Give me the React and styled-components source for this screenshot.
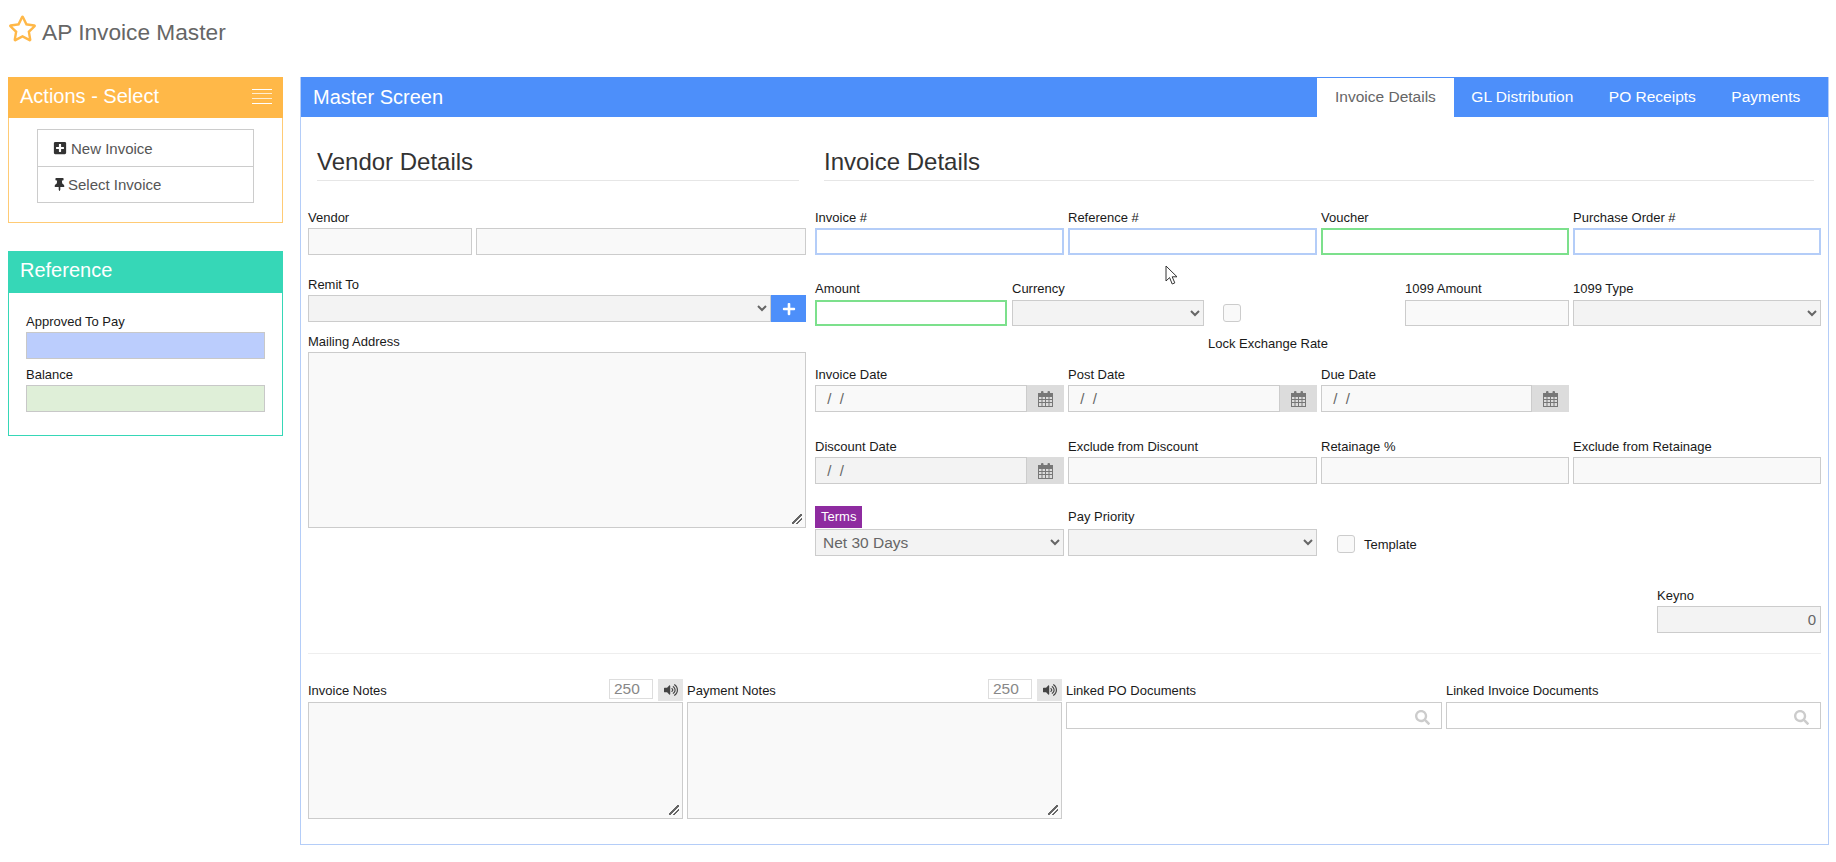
import React from 'react'
import styled, { createGlobalStyle } from 'styled-components'
import { FaRegStar, FaPlusSquare, FaThumbtack, FaPlus, FaVolumeUp, FaSearch } from 'react-icons/fa'

const GlobalStyle = createGlobalStyle`
    html, body {
        margin: 0;
        padding: 0;
        background: #fff;
        font-family: "Liberation Sans", Arial, sans-serif;
    }
    * {
        box-sizing: border-box;
    }
`

const controlColors = {
    blue: { border: '2px solid #b4cdf8', bg: '#fff' },
    green: { border: '2px solid #7ce08c', bg: '#fff' },
    plain: { border: '1px solid #ccc', bg: '#f9f9f9' },
    gray: { border: '1px solid #ccc', bg: '#f3f3f3' },
    white: { border: '1px solid #ccc', bg: '#fff' },
    approved: { border: '1px solid #c8c8c8', bg: '#bbcdfd' },
    balance: { border: '1px solid #c8c8c8', bg: '#dfefd8' },
}

const Page = styled.div`
    position: relative;
    width: 1836px;
    padding: 0 7px 0 8px;
`

const TitleBar = styled.div`
    display: flex;
    align-items: flex-start;
    gap: 5px;
    height: 77px;
    padding-top: 14px;
    color: #ffb848;
`

const TitleText = styled.h1`
    margin: 1px 0 0;
    font-size: 22.7px;
    line-height: 34px;
    font-weight: 400;
    color: #666;
`

const Columns = styled.div`
    display: flex;
    align-items: flex-start;
    gap: 17px;
`

const Sidebar = styled.aside`
    display: flex;
    flex-direction: column;
    gap: 28px;
    width: 275px;
    flex: none;
`

const Portlet = styled.section`
    border: 1px solid ${p => p.$border};
`

const PortletHead = styled.div`
    display: flex;
    align-items: center;
    justify-content: space-between;
    height: ${p => p.$h}px;
    margin: -1px -1px 0;
    padding: 0 11px 3px 12px;
    background: ${p => p.$bg};
    color: #fff;
    font-size: 20px;
`

const ActionGroup = styled.div`
    margin: 11px 28px 19px;
    border: 1px solid #ccc;
`

const ActionItem = styled.a`
    display: flex;
    align-items: center;
    gap: ${p => p.$gap}px;
    height: 36px;
    padding-left: 15px;
    color: #555;
    font-size: 15px;
    cursor: pointer;

    & + & {
        border-top: 1px solid #ccc;
    }

    svg {
        color: #333;
    }
`

const ReferenceBody = styled.div`
    display: flex;
    flex-direction: column;
    gap: 7px;
    padding: 20px 17px 23px;
`

const Panel = styled.main`
    width: 1529px;
    border: 1px solid #b4cdf8;
    padding: 0 7px 25px;
`

const PanelHead = styled.div`
    display: flex;
    align-items: flex-end;
    justify-content: space-between;
    height: 40px;
    margin: -1px -7px 0;
    padding-right: 10px;
    background: #4d8ffa;
`

const PanelTitle = styled.div`
    padding: 0 0 8px 12px;
    color: #fff;
    font-size: 20px;
    line-height: 24px;
`

const Tabs = styled.nav`
    display: flex;
`

const Tab = styled.a`
    height: 39px;
    padding: 0 17.75px;
    line-height: 37px;
    font-size: 15.5px;
    cursor: pointer;
    color: ${p => (p.$active ? '#666' : '#fff')};
    background: ${p => (p.$active ? '#fff' : 'transparent')};
`

const TopSection = styled.div`
    display: flex;
    gap: 9px;
`

const VendorColumn = styled.div`
    width: 498px;
    flex: none;
`

const InvoiceColumn = styled.div`
    width: 1006px;
    flex: none;
`

const SectionHeading = styled.h3`
    margin: 30px 7px 0 9px;
    padding-bottom: 3px;
    border-bottom: 1px solid #e6e6e6;
    font-size: 24px;
    line-height: 30px;
    font-weight: 400;
    color: #333;
`

const Row = styled.div`
    display: flex;
    margin-top: ${p => p.$mt || 0}px;
    gap: ${p => p.$gap || 0}px;
`

const Grid4 = styled.div`
    display: grid;
    grid-template-columns: 249px 249px 248px 248px;
    gap: 4px;
    align-items: end;
    margin-top: ${p => p.$mt || 0}px;
`

const Field = styled.div`
    min-width: 0;
    margin-top: ${p => p.$mt || 0}px;
    margin-left: ${p => p.$ml || 0}px;
    ${p => p.$w && `width: ${p.$w}px; flex: none;`}
`

const Label = styled.label`
    display: block;
    height: 16px;
    margin-bottom: 3px;
    font-size: 13px;
    line-height: ${p => p.$lh || 18}px;
    color: #1a1a1a;
    white-space: nowrap;
`

const TermsBadge = styled.span`
    display: block;
    width: 47px;
    height: 22px;
    margin-bottom: 1px;
    padding-left: 6px;
    background: #8e2ba0;
    color: #fff;
    font-size: 13px;
    line-height: 22px;
`

const Input = styled.input`
    display: block;
    width: 100%;
    height: ${p => p.$h || 27}px;
    min-width: 0;
    padding: 0 ${p => (p.$align === 'right' ? 4 : 7)}px;
    outline: none;
    border-radius: 0;
    font-family: inherit;
    font-size: 15px;
    color: #666;
    text-align: ${p => p.$align || 'left'};
    border: ${p => controlColors[p.$kind || 'plain'].border};
    background: ${p => controlColors[p.$kind || 'plain'].bg};
`

const VendorCode = styled(Input)`
    width: 164px;
    flex: none;
`

const Select = styled.select`
    display: block;
    width: 100%;
    height: ${p => p.$h || 27}px;
    padding: 0 3px;
    outline: none;
    border: 1px solid #ccc;
    border-radius: 0;
    background-color: #f3f3f3;
    font-family: inherit;
    font-size: 15.5px;
    color: #666;
`

const TextArea = styled.textarea`
    display: block;
    width: 100%;
    height: ${p => p.$h}px;
    padding: 6px 8px;
    outline: none;
    border: 1px solid #ccc;
    border-radius: 0;
    background: #f9f9f9;
    font-family: inherit;
    font-size: 14px;

    &::-webkit-resizer {
        background-image:
            linear-gradient(135deg, transparent 44%, #666 44%, #666 56%, transparent 56%),
            linear-gradient(135deg, transparent 68%, #666 68%, #666 80%, transparent 80%);
        background-size: 10px 10px;
        background-position: 2px 2px;
        background-repeat: no-repeat;
    }
`

const InputGroup = styled.div`
    display: flex;
`

const AddonButton = styled.button`
    display: flex;
    align-items: center;
    justify-content: center;
    flex: none;
    width: ${p => p.$w}px;
    height: 27px;
    padding: 0;
    border: 0;
    background: ${p => p.$bg};
    color: ${p => p.$color};
`

const Checkbox = styled.input.attrs({ type: 'checkbox' })`
    appearance: none;
    display: block;
    flex: none;
    width: 18px;
    height: 18px;
    margin: 0;
    border: 1px solid #ccc;
    border-radius: 3px;
    background: #f9f9f9;
`

const LockCell = styled.div`
    flex: 1;
    padding: 23px 0 0 19px;
`

const LockLabel = styled.div`
    margin: 14px 0 0 -15px;
    font-size: 13px;
    line-height: 16px;
    color: #1a1a1a;
    white-space: nowrap;
`

const TemplateCell = styled.div`
    display: flex;
    align-items: center;
    gap: 9px;
    margin-bottom: 3px;
    padding-left: 16px;
    font-size: 13px;
    color: #1a1a1a;
`

const KeynoRow = styled.div`
    display: flex;
    justify-content: flex-end;
    margin-top: 31px;
`

const Divider = styled.hr`
    height: 1px;
    margin: 20px 0 0;
    border: 0;
    background: #eee;
`

const NotesGrid = styled.div`
    display: grid;
    grid-template-columns: 375px 375px 376px 375px;
    gap: 4px;
    margin-top: 25px;
`

const NotesHead = styled.div`
    display: flex;
    align-items: flex-start;
    height: 23px;

    ${Label} {
        flex: 1;
        margin: 3px 0 0;
    }
`

const Counter = styled.input`
    width: 44px;
    height: 20px;
    margin-right: 5px;
    padding: 0 4px;
    outline: none;
    border: 1px solid #ddd;
    background: #fff;
    font-family: inherit;
    font-size: 15.5px;
    color: #888;
`

const SoundButton = styled.button`
    display: flex;
    align-items: center;
    justify-content: center;
    width: 25px;
    height: 22px;
    padding: 0;
    border: 0;
    background: #e5e5e5;
    color: #444;
`

const SearchBox = styled.div`
    position: relative;

    svg {
        position: absolute;
        top: 8px;
        right: 12px;
        color: #ccc;
    }
`

const Cursor = styled.svg`
    position: absolute;
    left: 1165px;
    top: 265px;
    pointer-events: none;
`

function CalendarIcon() {
    return (
        <svg width="15" height="16" viewBox="0 0 15 16" fill="#777">
            <rect x="3" y="0" width="2.5" height="4" rx="1" />
            <rect x="9.5" y="0" width="2.5" height="4" rx="1" />
            <path fillRule="evenodd" d="M0 2h15v14H0zM1 6v2h2.5V6zM4.5 6v2H7V6zM8 6v2h2.5V6zM11.5 6v2H14V6zM1 9v2h2.5V9zM4.5 9v2H7V9zM8 9v2h2.5V9zM11.5 9v2H14V9zM1 12v3h2.5v-3zM4.5 12v3H7v-3zM8 12v3h2.5v-3zM11.5 12v3H14v-3z" />
        </svg>
    )
}

function MenuLines() {
    return (
        <svg width="20" height="15" viewBox="0 0 20 15" fill="#fff">
            <rect y="0" width="20" height="1" />
            <rect y="4" width="20" height="1" opacity="0.75" />
            <rect y="9" width="20" height="1" opacity="0.75" />
            <rect y="14" width="20" height="1" />
        </svg>
    )
}

function TextField({ label, kind }) {
    return (
        <Field>
            <Label>{label}</Label>
            <Input $kind={kind} readOnly />
        </Field>
    )
}

function DateField({ label, kind }) {
    return (
        <Field>
            <Label>{label}</Label>
            <InputGroup>
                <Input $kind={kind} readOnly value=" /  /" />
                <AddonButton $w={37} $bg="#dcdcdc" $color="#777"><CalendarIcon /></AddonButton>
            </InputGroup>
        </Field>
    )
}

function NotesField({ label }) {
    return (
        <div>
            <NotesHead>
                <Label>{label}</Label>
                <Counter readOnly value="250" />
                <SoundButton><FaVolumeUp size={14} /></SoundButton>
            </NotesHead>
            <TextArea $h={117} />
        </div>
    )
}

function LinkedField({ label }) {
    return (
        <div>
            <NotesHead>
                <Label>{label}</Label>
            </NotesHead>
            <SearchBox>
                <Input $kind="white" readOnly />
                <FaSearch size={15} />
            </SearchBox>
        </div>
    )
}

export default function App() {
    return (
        <Page>
            <GlobalStyle />
            <TitleBar>
                <FaRegStar size={29} />
                <TitleText>AP Invoice Master</TitleText>
            </TitleBar>

            <Columns>
                <Sidebar>
                    <Portlet $border="#ffcb75">
                        <PortletHead $bg="#ffb848" $h={41}>
                            <span>Actions - Select</span>
                            <MenuLines />
                        </PortletHead>
                        <ActionGroup>
                            <ActionItem $gap={4}><FaPlusSquare size={14} />New Invoice</ActionItem>
                            <ActionItem $gap={2}><FaThumbtack size={13} />Select Invoice</ActionItem>
                        </ActionGroup>
                    </Portlet>

                    <Portlet $border="#36d7b7">
                        <PortletHead $bg="#36d7b7" $h={42}>Reference</PortletHead>
                        <ReferenceBody>
                            <TextField label="Approved To Pay" kind="approved" />
                            <TextField label="Balance" kind="balance" />
                        </ReferenceBody>
                    </Portlet>
                </Sidebar>

                <Panel>
                    <PanelHead>
                        <PanelTitle>Master Screen</PanelTitle>
                        <Tabs>
                            <Tab $active>Invoice Details</Tab>
                            <Tab>GL Distribution</Tab>
                            <Tab>PO Receipts</Tab>
                            <Tab>Payments</Tab>
                        </Tabs>
                    </PanelHead>

                    <TopSection>
                        <VendorColumn>
                            <SectionHeading>Vendor Details</SectionHeading>
                            <Field $mt={28}>
                                <Label>Vendor</Label>
                                <Row $gap={4}>
                                    <VendorCode readOnly />
                                    <Input readOnly />
                                </Row>
                            </Field>
                            <Field $mt={21}>
                                <Label>Remit To</Label>
                                <InputGroup>
                                    <Select><option></option></Select>
                                    <AddonButton $w={35} $bg="#4d8ffa" $color="#fff"><FaPlus size={14} /></AddonButton>
                                </InputGroup>
                            </Field>
                            <Field $mt={11}>
                                <Label>Mailing Address</Label>
                                <TextArea $h={176} />
                            </Field>
                        </VendorColumn>

                        <InvoiceColumn>
                            <SectionHeading>Invoice Details</SectionHeading>
                            <Grid4 $mt={28}>
                                <TextField label="Invoice #" kind="blue" />
                                <TextField label="Reference #" kind="blue" />
                                <TextField label="Voucher" kind="green" />
                                <TextField label="Purchase Order #" kind="blue" />
                            </Grid4>

                            <Row $mt={26}>
                                <Field $w={192}>
                                    <Label $lh={16}>Amount</Label>
                                    <Input $kind="green" $h={26} readOnly />
                                </Field>
                                <Field $w={192} $ml={5}>
                                    <Label $lh={16}>Currency</Label>
                                    <Select $h={26}><option></option></Select>
                                </Field>
                                <LockCell>
                                    <Checkbox />
                                    <LockLabel>Lock Exchange Rate</LockLabel>
                                </LockCell>
                                <Field $w={164}>
                                    <Label $lh={16}>1099 Amount</Label>
                                    <Input $h={26} readOnly />
                                </Field>
                                <Field $w={248} $ml={4}>
                                    <Label $lh={16}>1099 Type</Label>
                                    <Select $h={26}><option></option></Select>
                                </Field>
                            </Row>

                            <Grid4 $mt={14}>
                                <DateField label="Invoice Date" />
                                <DateField label="Post Date" />
                                <DateField label="Due Date" />
                            </Grid4>

                            <Grid4 $mt={26}>
                                <DateField label="Discount Date" kind="gray" />
                                <TextField label="Exclude from Discount" />
                                <TextField label="Retainage %" />
                                <TextField label="Exclude from Retainage" />
                            </Grid4>

                            <Grid4 $mt={22}>
                                <Field>
                                    <TermsBadge>Terms</TermsBadge>
                                    <Select><option>Net 30 Days</option></Select>
                                </Field>
                                <Field>
                                    <Label $lh={14}>Pay Priority</Label>
                                    <Select><option></option></Select>
                                </Field>
                                <TemplateCell>
                                    <Checkbox />
                                    <span>Template</span>
                                </TemplateCell>
                            </Grid4>

                            <KeynoRow>
                                <Field $w={164}>
                                    <Label>Keyno</Label>
                                    <Input $kind="gray" $align="right" readOnly value="0" />
                                </Field>
                            </KeynoRow>
                        </InvoiceColumn>
                    </TopSection>

                    <Divider />

                    <NotesGrid>
                        <NotesField label="Invoice Notes" />
                        <NotesField label="Payment Notes" />
                        <LinkedField label="Linked PO Documents" />
                        <LinkedField label="Linked Invoice Documents" />
                    </NotesGrid>
                </Panel>
            </Columns>

            <Cursor width="14" height="20" viewBox="0 0 14 20">
                <path d="M1 1v15l3.6-3.4L7.2 19l2.6-1.1-2.6-6.1H12z" fill="#fff" stroke="#333" strokeWidth="1" />
            </Cursor>
        </Page>
    )
}
